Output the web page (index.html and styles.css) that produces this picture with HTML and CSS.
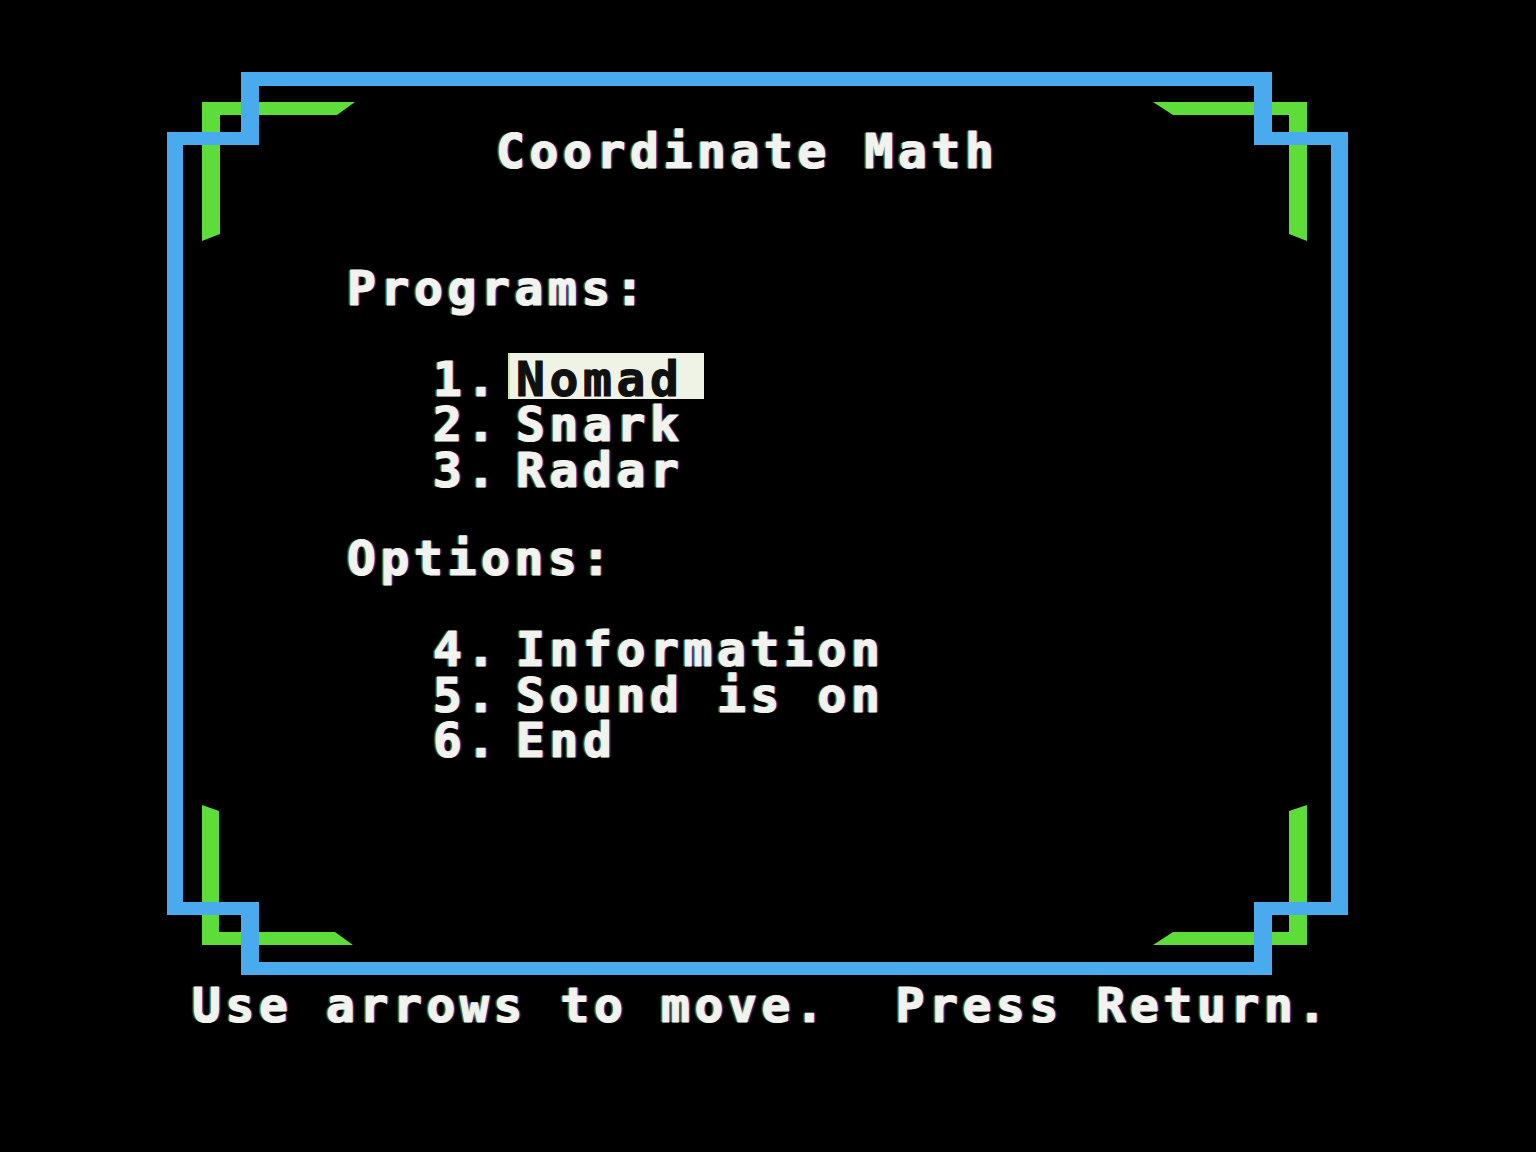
FILE: index.html
```html
<!DOCTYPE html>
<html lang="en">
<head>
<meta charset="utf-8">
<title>Coordinate Math</title>
<link rel="stylesheet" href="styles.css">
</head>
<body>
<div class="screen">
  <svg class="frame" width="1536" height="1152" viewBox="0 0 1536 1152" aria-hidden="true">
    <g class="green">
      <polygon points="202,102 355,102 337,115 220,115 220,234 202,241"/>
      <polygon points="1153,102 1307,102 1307,241 1289,234 1289,115 1173,115"/>
      <polygon points="202,805 219,811 219,932 335,932 353,945 202,945"/>
      <polygon points="1307,805 1307,945 1153,945 1173,932 1289,932 1289,811"/>
    </g>
    <g class="blue">
      <rect x="241" y="72" width="1031" height="14"/>
      <rect x="241" y="72" width="18" height="73"/>
      <rect x="167" y="132" width="92" height="13"/>
      <rect x="167" y="132" width="16" height="783"/>
      <rect x="167" y="902" width="92" height="13"/>
      <rect x="241" y="902" width="18" height="73"/>
      <rect x="241" y="962" width="1031" height="13"/>
      <rect x="1254" y="902" width="18" height="73"/>
      <rect x="1254" y="902" width="94" height="13"/>
      <rect x="1331" y="132" width="17" height="783"/>
      <rect x="1254" y="132" width="94" height="13"/>
      <rect x="1254" y="72" width="18" height="73"/>
    </g>
  </svg>

  <div class="text">
    <h1 class="title">Coordinate Math</h1>

    <section class="group first">
      <h2 class="heading">Programs:</h2>
      <ol class="menu">
        <li><span class="num">1.</span><span class="name sel">Nomad</span></li>
        <li><span class="num">2.</span><span class="name">Snark</span></li>
        <li><span class="num">3.</span><span class="name">Radar</span></li>
      </ol>
    </section>

    <section class="group second">
      <h2 class="heading">Options:</h2>
      <ol class="menu">
        <li><span class="num">4.</span><span class="name">Information</span></li>
        <li><span class="num">5.</span><span class="name">Sound is on</span></li>
        <li><span class="num">6.</span><span class="name">End</span></li>
      </ol>
    </section>

    <p class="prompt">Use arrows to move.  Press Return.</p>
  </div>
</div>
</body>
</html>
```

FILE: styles.css
```css
* {
  box-sizing: border-box;
}

html, body {
  margin: 0;
  padding: 0;
  background: #000;
}

.screen {
  position: relative;
  width: 1536px;
  height: 1152px;
  overflow: hidden;
  background: #000;
}

.frame {
  position: absolute;
  left: 0;
  top: 0;
  filter: blur(0.7px);
}

.frame .blue {
  fill: #4aaaee;
}

.frame .green {
  fill: #5edc3a;
}

.text {
  position: relative;
  padding-top: 129px;
  font-family: "DejaVu Sans Mono", "Liberation Mono", monospace;
  font-weight: bold;
  font-size: 48px;
  line-height: 45.5px;
  letter-spacing: 4.6px;
  color: #f2f2ee;
  -webkit-text-stroke: 1.2px #f2f2ee;
  text-shadow: -2px 0 1px rgba(110, 225, 70, 0.55), 2px 0 1px rgba(175, 80, 235, 0.55);
}

.title,
.heading,
.prompt {
  margin: 0;
  font: inherit;
}

.title {
  padding-left: 496px;
}

.group.first {
  margin-top: 91px;
}

.group.second {
  margin-top: 43px;
}

.heading {
  padding-left: 347px;
}

.menu {
  list-style: none;
  margin: 45.5px 0 0;
  padding: 0 0 0 433px;
}

.menu li {
  display: flex;
  height: 45.5px;
  white-space: pre;
}

.num {
  width: 83px;
}

.sel {
  align-self: flex-start;
  height: 42px;
  margin-left: -6px;
  padding: 0 20px 0 6px;
  background: #eef3e6;
  color: #101010;
  -webkit-text-stroke: 1.2px #101010;
  text-shadow: none;
  box-shadow: 0 -4px 0 #eef3e6, -2px -4px 0 #c8ec9c, -2px 0 0 #c8ec9c;
}

.prompt {
  margin-top: 219.5px;
  padding-left: 192px;
  white-space: pre;
}
```
